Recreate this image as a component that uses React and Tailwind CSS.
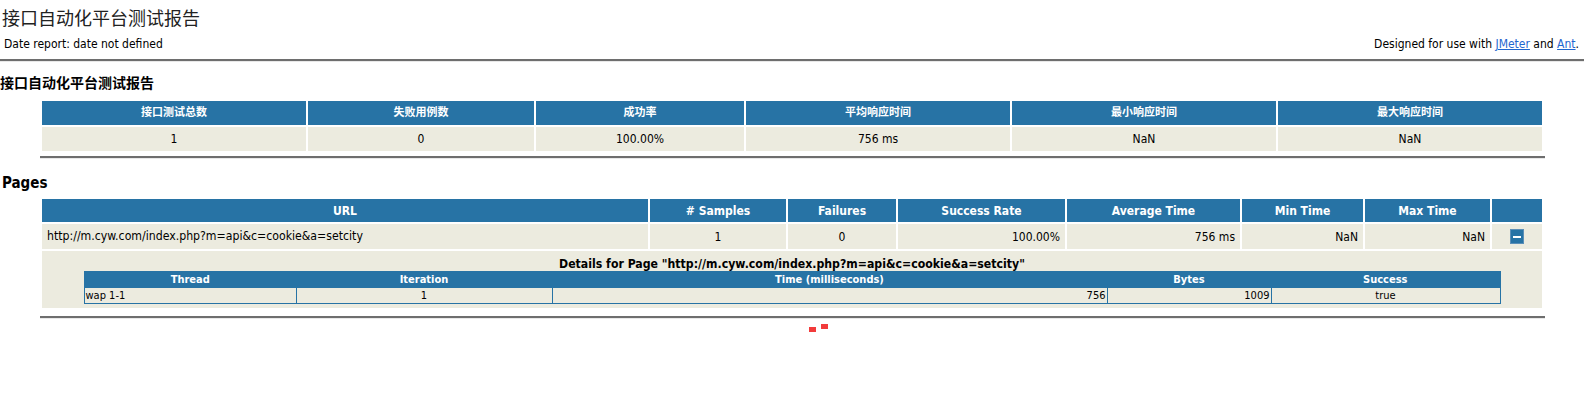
import React from 'react';

const summaryCols = [
  { label: '接口测试总数', value: '1', w: 'w-[264px]' },
  { label: '失败用例数', value: '0', w: 'w-[226px]' },
  { label: '成功率', value: '100.00%', w: 'w-[208px]' },
  { label: '平均响应时间', value: '756 ms', w: 'w-[264px]' },
  { label: '最小响应时间', value: 'NaN', w: 'w-[264px]' },
  { label: '最大响应时间', value: 'NaN', w: 'w-[264px]' },
];

const pageCols = [
  { label: 'URL', w: 'w-[606px]' },
  { label: '# Samples', w: 'w-[136px]' },
  { label: 'Failures', w: 'w-[108px]' },
  { label: 'Success Rate', w: 'w-[167px]' },
  { label: 'Average Time', w: 'w-[173px]' },
  { label: 'Min Time', w: 'w-[121px]' },
  { label: 'Max Time', w: 'w-[125px]' },
  { label: '', w: 'w-[50px]' },
];

const url = 'http://m.cyw.com/index.php?m=api&c=cookie&a=setcity';

function Rule({ full }) {
  return (
    <div className={full ? 'w-full' : 'mx-auto w-[1505px]'}>
      <div className="h-[2px] bg-[#6e6e6e]" />
      <div className="h-[1px] bg-[#e8e8e8]" />
    </div>
  );
}

export default function App() {
  return (
    <div className="w-[1584px] h-[397px] bg-white text-black font-['DejaVu_Sans_Condensed','Liberation_Sans','Noto_Sans_CJK_SC',sans-serif]">
      <h1 className="h-[36px] px-[2px] text-[18px] leading-[35px] font-normal text-[#222] font-['Noto_Sans_CJK_SC',sans-serif]">
        接口自动化平台测试报告
      </h1>
      <div className="flex justify-between px-[4px] pr-[5px] h-[17px] text-[12px] leading-[17px]">
        <span>Date report: date not defined</span>
        <span>
          Designed for use with <a href="#" className="text-[#1f66cf] underline">JMeter</a> and{' '}
          <a href="#" className="text-[#1f66cf] underline">Ant</a>.
        </span>
      </div>
      <div className="mt-[6px]">
        <Rule full />
      </div>

      <h2 className="mt-[10px] h-[20px] text-[14px] leading-[20px] font-bold font-['Noto_Sans_CJK_SC',sans-serif]">
        接口自动化平台测试报告
      </h2>

      <table className="mt-[7px] mx-auto w-[1504px] table-fixed border-separate border-spacing-[2px] text-[12px]">
        <thead>
          <tr>
            {summaryCols.map((c) => (
              <th key={c.label} className={`${c.w} h-[24px] bg-[#2773a5] text-white text-[11px] font-bold`}>{c.label}</th>
            ))}
          </tr>
        </thead>
        <tbody>
          <tr>
            {summaryCols.map((c) => (
              <td key={c.label} className="h-[24px] bg-[#ecebdf] text-center">{c.value}</td>
            ))}
          </tr>
        </tbody>
      </table>

      <div className="mt-[3px]">
        <Rule />
      </div>

      <h2 className="mt-[14px] h-[20px] px-[2px] text-[15px] leading-[20px] font-bold">Pages</h2>

      <table className="mt-[4px] mx-auto w-[1504px] table-fixed border-separate border-spacing-[2px] text-[12px]">
        <thead>
          <tr>
            {pageCols.map((c, i) => (
              <th key={i} className={`${c.w} h-[23px] bg-[#2773a5] text-white font-bold`}>{c.label}</th>
            ))}
          </tr>
        </thead>
        <tbody>
          <tr>
            <td className="h-[25px] bg-[#ecebdf] px-[5px] text-left text-[12.2px]">{url}</td>
            <td className="bg-[#ecebdf] text-center">1</td>
            <td className="bg-[#ecebdf] text-center">0</td>
            <td className="bg-[#ecebdf] px-[5px] text-right">100.00%</td>
            <td className="bg-[#ecebdf] px-[5px] text-right">756 ms</td>
            <td className="bg-[#ecebdf] px-[5px] text-right">NaN</td>
            <td className="bg-[#ecebdf] px-[5px] text-right">NaN</td>
            <td className="bg-[#ecebdf]">
              <div className="mx-auto flex h-[15px] w-[14px] items-center justify-center bg-[#2773a5] border border-[#5b8fb8]">
                <div className="h-[2px] w-[8px] bg-white" />
              </div>
            </td>
          </tr>
          <tr>
            <td colSpan={8} className="h-[57px] bg-[#ecebdf] align-top">
              <div className="pt-[5px] h-[20px] text-center text-[12.2px] leading-[16px] font-bold">
                Details for Page "{url}"
              </div>
              <table className="mx-auto w-[1416px] table-fixed border-collapse border border-[#2773a5] text-[11px]">
                <thead>
                  <tr className="bg-[#2773a5] text-white font-bold">
                    <th className="w-[212px] h-[15px] leading-[15px]">Thread</th>
                    <th className="w-[256px] leading-[15px]">Iteration</th>
                    <th className="w-[555px] leading-[15px]">Time (milliseconds)</th>
                    <th className="w-[164px] leading-[15px]">Bytes</th>
                    <th className="w-[229px] leading-[15px]">Success</th>
                  </tr>
                </thead>
                <tbody>
                  <tr className="leading-[15px]">
                    <td className="border border-[#2773a5] px-[1px] text-left">wap 1-1</td>
                    <td className="border border-[#2773a5] text-center">1</td>
                    <td className="border border-[#2773a5] px-[1px] text-right">756</td>
                    <td className="border border-[#2773a5] px-[1px] text-right">1009</td>
                    <td className="border border-[#2773a5] text-center">true</td>
                  </tr>
                </tbody>
              </table>
            </td>
          </tr>
        </tbody>
      </table>

      <div className="mt-[6px]">
        <Rule />
      </div>

      <div className="ml-[809px] flex items-start gap-[5px]">
        <span className="mt-[8px] block h-[5px] w-[7px] bg-[#f23b3b]" />
        <span className="mt-[5px] block h-[5px] w-[7px] bg-[#f23b3b]" />
      </div>
    </div>
  );
}
